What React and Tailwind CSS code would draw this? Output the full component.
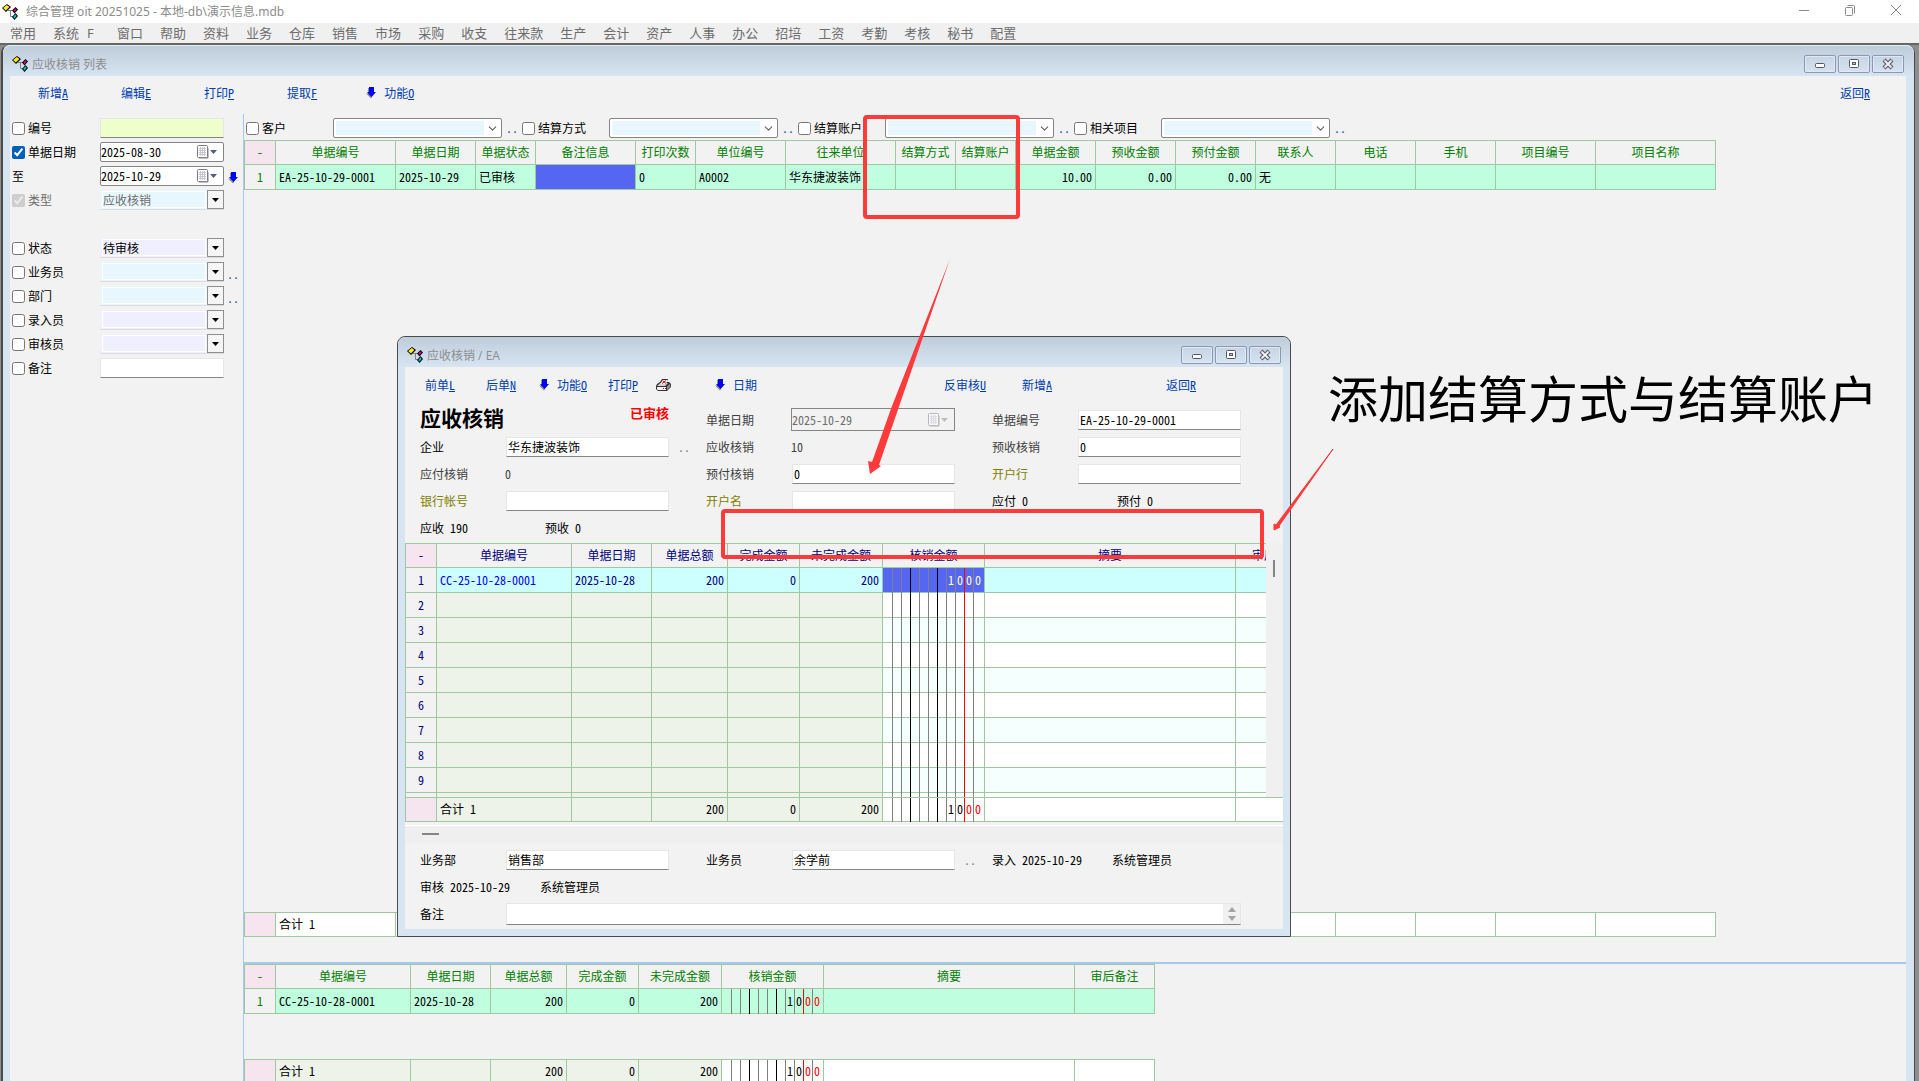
import React from 'react';
import { ChevronDown } from 'lucide-react';

const MENU = ['常用', '系统', '窗口', '帮助', '资料', '业务', '仓库', '销售', '市场', '采购', '收支', '往来款', '生产', '会计', '资产', '人事', '办公', '招培', '工资', '考勤', '考核', '秘书', '配置'];

const MAIN_COLS = [
    { label: '-', width: 31 },
    { label: '单据编号', width: 120, value: 'EA-25-10-29-0001' },
    { label: '单据日期', width: 80, value: '2025-10-29' },
    { label: '单据状态', width: 60, value: '已审核' },
    { label: '备注信息', width: 100, selected: true },
    { label: '打印次数', width: 60, value: '0' },
    { label: '单位编号', width: 90, value: 'A0002' },
    { label: '往来单位', width: 110, value: '华东捷波装饰' },
    { label: '结算方式', width: 60 },
    { label: '结算账户', width: 60 },
    { label: '单据金额', width: 80, value: '10.00', right: true },
    { label: '预收金额', width: 80, value: '0.00', right: true },
    { label: '预付金额', width: 80, value: '0.00', right: true },
    { label: '联系人', width: 80, value: '无' },
    { label: '电话', width: 80 },
    { label: '手机', width: 80 },
    { label: '项目编号', width: 100 },
    { label: '项目名称', width: 120 },
];

const DETAIL_HEADS = ['-', '单据编号', '单据日期', '单据总额', '完成金额', '未完成金额', '核销金额', '摘要', '审后备注'];
const DETAIL_WIDTHS = [31, 135, 80, 76, 72, 83, 102, 251, 80];
const DIALOG_WIDTHS = [31, 135, 80, 76, 72, 83, 102, 251, 30];
const DIALOG_TOTAL_WIDTHS = [31, 135, 80, 76, 72, 83, 102, 251, 47];

const sum = (list) => list.reduce((a, b) => a + b, 0);

function AppIcon() {
    return (
        <svg width="16" height="16" viewBox="0 0 16 16" className="shrink-0">
            <path d="M6 6.500h6M8.500 6v6.500h3" fill="none" stroke="#808080" />
            <path d="M5 0l4 3-5 5-4-4z" fill="#000" />
            <path d="M4.800 1l2.600 2-3.600 3.600L1.200 4z" fill="#ffef00" />
            <path d="M13.500 3l2.500 2.500-3.500 4-2.500-3z" fill="#000" />
            <path d="M13.500 4.300l1.200 1.200-2.200 2.500-1.200-1.500z" fill="#d0008c" />
            <path d="M13.500 9l2.500 3-3.500 4L10 13z" fill="#000" />
            <path d="M13.400 10.300l1.300 1.700-2.200 2.500-1.300-1.500z" fill="#00c0c0" />
        </svg>
    );
}

function BlueArrow() {
    return (
        <svg width="10" height="12" viewBox="0 0 10 12" className="shrink-0">
            <path d="M2 1h4v5h2.500L5 11.500 0 6.500h2z" fill="#8c8c8c" />
            <path d="M3 0h5v5h2L5.500 10 1 5h2z" fill="#0000ff" />
        </svg>
    );
}

function CalendarIcon({ muted }) {
    return (
        <svg width="20" height="14" viewBox="0 0 20 14" className={muted ? 'shrink-0 opacity-50' : 'shrink-0'}>
            <rect x="1.500" y="2.500" width="10" height="11" rx="1" fill="#8d8480" />
            <rect x="0.500" y="0.500" width="10" height="12" rx="1" fill="#fff" stroke="#7d7d86" />
            <path d="M2 3.500h7M2 5.500h7M2 7.500h7M2 9.500h7M3.500 2v9M5.500 2v9M7.500 2v9" stroke="#c4c8d6" />
            <path d="M13 5h7l-3.500 4z" fill={muted ? '#8c8c7c' : '#4d6185'} />
        </svg>
    );
}

function PrinterIcon() {
    return (
        <svg width="15" height="12" viewBox="0 0 15 12">
            <path d="M1 5l3-2 2-3h6l-1 3h2l2 2v3l-4 4H2L0 10V7z" fill="#333" />
            <path d="M1 7l3.500-3H12l-3 3z" fill="#d4d4d4" />
            <path d="M1 8h9v3H2l-1-1z" fill="#f4f4f4" />
            <path d="M11 7.500L13.500 5l.700.700V8L11 11z" fill="#8e8e8e" />
            <path d="M6.500 1h5l-1.500 4H4.500z" fill="#fff" />
            <path d="M6.500 1.500l3.500 3M10 1.500L6 4.500M7 9.500h1M9 9.500h1" stroke="#e00000" />
        </svg>
    );
}

function WindowButtons() {
    const cls = 'flex h-[18px] w-8 items-center justify-center rounded-xs border border-[#8a98b4] bg-gradient-to-b from-[#c6d4e4] to-[#d6e2f0] shadow-[inset_0_0_0_1px_#dfe8f3]';
    return (
        <div className="ml-auto flex gap-[2px]">
            <button aria-label="最小化" className={cls}>
                <svg width="12" height="12" viewBox="0 0 12 12"><rect x="1.500" y="5.500" width="9" height="4" rx="1" fill="#fff" stroke="#535666" /></svg>
            </button>
            <button aria-label="还原" className={cls}>
                <svg width="12" height="12" viewBox="0 0 12 12">
                    <rect x="1.500" y="1.500" width="9" height="8" rx="1" fill="#fff" stroke="#535666" />
                    <rect x="4.500" y="4.500" width="3" height="2" fill="#b8c6d8" stroke="#535666" />
                </svg>
            </button>
            <button aria-label="关闭" className={cls}>
                <svg width="12" height="12" viewBox="0 0 12 12">
                    <path d="M2 2l8 8M10 2L2 10" stroke="#535666" strokeWidth="4" />
                    <path d="M2.500 2.500l7 7M9.500 2.500l-7 7" stroke="#f4f4f4" strokeWidth="1.800" />
                </svg>
            </button>
        </div>
    );
}

function Command({ text, hotkey, arrow }) {
    return (
        <button className="flex items-center gap-2 whitespace-nowrap text-[#003cb0]">
            {arrow && <BlueArrow />}
            <span>{text}{hotkey && <u>{hotkey}</u>}</span>
        </button>
    );
}

function Dots() {
    return <button aria-label="选择" className="w-4 shrink-0 text-left text-[#1c4f9c]">..</button>;
}

function SideRow({ id, label, checked, disabled, plain, children }) {
    return (
        <div className="flex h-6 items-center pl-[2px]">
            <div className={`flex w-[88px] shrink-0 items-center gap-[3px] ${disabled ? 'text-[#6d6d6d]' : 'text-black'}`}>
                {!plain && <input type="checkbox" id={`${id}-on`} defaultChecked={checked} disabled={disabled} className="size-[13px] accent-[#005fb8]" />}
                <label htmlFor={plain ? id : `${id}-on`}>{label}</label>
            </div>
            {children}
        </div>
    );
}

function DateBox({ id, label, value }) {
    return (
        <div className="flex h-5 w-[124px] shrink-0 items-center rounded-xs border border-[#858585] bg-white pr-[6px]">
            <input id={id} aria-label={label} defaultValue={value} className="w-0 flex-1 outline-none" />
            <CalendarIcon />
        </div>
    );
}

function SideSelect({ label, value = '', tint, disabled }) {
    return (
        <div className={`flex h-5 w-[124px] shrink-0 border-b border-[#dcdcdc] ${tint}`}>
            <select aria-label={label} defaultValue={value} disabled={disabled} className="m-px ml-[2px] w-0 flex-1 appearance-none border border-white leading-none outline-none disabled:text-[#6d6d6d] disabled:opacity-100">
                <option value={value}>{value}</option>
            </select>
            <span className="flex w-[17px] items-center justify-center border border-[#8f8f8f] bg-[#f5f5f5]">
                <svg width="7" height="4" viewBox="0 0 7 4"><path d="M0 0h7L3.500 4z" fill="#000" /></svg>
            </span>
        </div>
    );
}

function Sidebar() {
    return (
        <aside className="w-[233px] shrink-0 pt-[2px]">
            <SideRow id="no" label="编号">
                <input aria-label="编号" className="h-5 w-[124px] border border-b-[#858585] border-[#e6e6e6] bg-[#eeffcc] outline-none" />
            </SideRow>
            <SideRow id="date" label="单据日期" checked><DateBox label="单据日期" value="2025-08-30" /></SideRow>
            <SideRow id="date-to" label="至" plain>
                <DateBox id="date-to" value="2025-10-29" />
                <span className="ml-1 pt-1"><BlueArrow /></span>
            </SideRow>
            <SideRow id="kind" label="类型" checked disabled><SideSelect label="类型" value="应收核销" tint="bg-[#e8f7fe]" disabled /></SideRow>
            <div className="h-6" />
            <SideRow id="state" label="状态"><SideSelect label="状态" value="待审核" tint="bg-[#efefff]" /></SideRow>
            <SideRow id="sales" label="业务员"><SideSelect label="业务员" tint="bg-[#e8f7fe]" /><span className="ml-[3px] pt-1"><Dots /></span></SideRow>
            <SideRow id="dept" label="部门"><SideSelect label="部门" tint="bg-[#e8f7fe]" /><span className="ml-[3px] pt-1"><Dots /></span></SideRow>
            <SideRow id="input-by" label="录入员"><SideSelect label="录入员" tint="bg-[#efefff]" /></SideRow>
            <SideRow id="audit-by" label="审核员"><SideSelect label="审核员" tint="bg-[#efefff]" /></SideRow>
            <SideRow id="memo" label="备注">
                <input aria-label="备注" className="h-5 w-[124px] border border-b-[#858585] border-[#e6e6e6] bg-white outline-none" />
            </SideRow>
        </aside>
    );
}

function FilterBar() {
    return (
        <div className="flex h-6 items-center pl-[2px]">
            {['客户', '结算方式', '结算账户', '相关项目'].map((name) => (
                <div key={name} className="flex w-[276px] items-center">
                    <label className="flex w-[88px] items-center gap-[3px]">
                        <input type="checkbox" className="size-[13px] accent-[#005fb8]" />
                        {name}
                    </label>
                    <div className="mr-1 flex h-5 w-[169px] shrink-0 items-center rounded-xs border border-[#858585] bg-white p-[2px]">
                        <select aria-label={name} className="h-full w-0 flex-1 appearance-none bg-[#e8f7fe] outline-none"><option></option></select>
                        <ChevronDown size={13} strokeWidth={2} className="ml-[2px] text-[#606060]" />
                    </div>
                    <Dots />
                </div>
            ))}
        </div>
    );
}

function Grid({ widths, children, label }) {
    return (
        <table aria-label={label} className="table-fixed border-separate border-spacing-0 border-t border-l border-[#a0c8a0]" style={{ width: sum(widths) + 1 }}>
            <colgroup>{widths.map((w, i) => <col key={i} style={{ width: w }} />)}</colgroup>
            {children}
        </table>
    );
}

function Th({ children, corner, last }) {
    return (
        <th className={`h-6 overflow-hidden border-b border-[#a0c8a0] px-0 pt-0 pb-[2px] font-normal whitespace-nowrap ${last ? '' : 'border-r'} ${corner ? 'bg-[#f6e5ef]' : ''}`}>
            {children}
        </th>
    );
}

function Td({ children, className = '', right, center, last, height = 'h-[25px]' }) {
    return (
        <td className={`${height} overflow-hidden border-b border-[#a0c8a0] px-[3px] pt-0 pb-px whitespace-nowrap ${last ? '' : 'border-r'} ${right ? 'text-right' : ''} ${center ? 'text-center' : ''} ${className}`}>
            {children}
        </td>
    );
}

const RULES = ['', 'border-l border-[#808080]', 'border-l border-[#808080]', 'border-l border-black', 'border-l border-[#808080]', 'border-l border-[#808080]', 'border-l border-black', 'border-l border-[#808080]', 'border-l border-[#808080]', 'border-l border-[#ff0000]', 'border-l border-[#808080]'];

// Ledger style amount: one digit per ruled slot, red rule before the cents
function LedgerCell({ value = '', className = '', height = 'h-[25px]', cents = 'text-[#ff0000]' }) {
    const digits = value.padStart(RULES.length, ' ').split('');
    return (
        <td className={`${height} border-r border-b border-[#a0c8a0] p-0 ${className}`}>
            <div className={`-mb-px flex ${height}`}>
                {RULES.map((rule, i) => (
                    <span key={i} className={`flex w-[9px] shrink-0 items-center justify-center pb-[2px] ${rule} ${i > 8 ? cents : ''}`}>{digits[i].trim()}</span>
                ))}
            </div>
        </td>
    );
}

function MainTable() {
    const widths = MAIN_COLS.map((c) => c.width);
    return (
        <Grid widths={widths} label="应收核销">
            <thead className="text-[#008000]">
                <tr>{MAIN_COLS.map((c, i) => <Th key={c.label} corner={i === 0}>{c.label}</Th>)}</tr>
            </thead>
            <tbody>
                <tr className="bg-[#bfffdf]">
                    {MAIN_COLS.map((c, i) => i === 0
                        ? <Td key={i} center className="bg-[#f2f2f2] text-[#008000]">1</Td>
                        : <Td key={i} right={c.right} className={c.selected ? 'bg-[#5566f2]' : ''}>{c.value}</Td>)}
                </tr>
            </tbody>
        </Grid>
    );
}

function MainTotals() {
    return (
        <Grid widths={MAIN_COLS.map((c) => c.width)} label="合计">
            <tbody>
                <tr className="bg-white">
                    {MAIN_COLS.map((c, i) => <Td key={i} height="h-6" className={i === 0 ? 'bg-[#f6e5ef]' : ''}>{i === 1 ? '合计 1' : ''}</Td>)}
                </tr>
            </tbody>
        </Grid>
    );
}

function TotalsRow({ lastOpen }) {
    return (
        <tr className="bg-[#edf3e8]">
            <Td height="h-6" className="bg-[#f6e5ef]" />
            <Td height="h-6">合计 1</Td>
            <Td height="h-6" />
            <Td height="h-6" right>200</Td>
            <Td height="h-6" right>0</Td>
            <Td height="h-6" right>200</Td>
            <LedgerCell height="h-6" value="1000" className="bg-white" />
            <Td height="h-6" className="bg-white" />
            <Td height="h-6" className="bg-white" last={lastOpen} />
        </tr>
    );
}

function DetailPane() {
    return (
        <div className="flex h-[117px] shrink-0 flex-col gap-[45px] overflow-hidden">
            <Grid widths={DETAIL_WIDTHS} label="核销明细">
                <thead className="text-[#008000]">
                    <tr>{DETAIL_HEADS.map((h, i) => <Th key={h} corner={i === 0}>{h}</Th>)}</tr>
                </thead>
                <tbody>
                    <tr className="bg-[#bfffdf]">
                        <Td center className="bg-[#f2f2f2] text-[#008000]">1</Td>
                        <Td>CC-25-10-28-0001</Td>
                        <Td>2025-10-28</Td>
                        <Td right>200</Td>
                        <Td right>0</Td>
                        <Td right>200</Td>
                        <LedgerCell value="1000" />
                        <Td />
                        <Td />
                    </tr>
                </tbody>
            </Grid>
            <Grid widths={DETAIL_WIDTHS} label="明细合计">
                <tbody><TotalsRow /></tbody>
            </Grid>
        </div>
    );
}

function Field({ id, label, value, tone = 'text-black', dots }) {
    return (
        <div className="flex h-[27px] items-center">
            <label htmlFor={id} className={`w-[86px] ${tone}`}>{label}</label>
            <input id={id} defaultValue={value} className="h-5 w-[163px] border border-[#e6e6e6] border-b-[#858585] bg-white px-px pb-px text-black outline-none" />
            {dots && <button aria-label="选择" className="ml-[9px] text-[#808080]">..</button>}
        </div>
    );
}

function Fact({ label, value, tone = 'text-[#404040]', wide = 'w-[85px]' }) {
    return (
        <div className={`flex h-[27px] items-center ${tone}`}>
            <span className={wide}>{label}</span>
            <span>{value}</span>
        </div>
    );
}

function DialogForm() {
    return (
        <div className="grid grid-cols-[286px_286px_1fr] pl-[15px]">
            <div className="flex h-[27px] pr-[37px]">
                <h1 className="text-[21px] leading-[22px] font-bold">应收核销</h1>
                <strong className="ml-auto text-[13px] leading-[14px] text-[#ff0000]">已审核</strong>
            </div>
            <div className="flex h-[27px] items-center">
                <label htmlFor="ea-date" className="w-[85px] text-[#404040]">单据日期</label>
                <div className="flex h-[23px] w-[164px] items-center border border-[#858585] pr-[6px]">
                    <input id="ea-date" disabled defaultValue="2025-10-29" className="w-0 flex-1 text-[#6d6d6d] outline-none" />
                    <CalendarIcon muted />
                </div>
            </div>
            <Field id="ea-no" label="单据编号" value="EA-25-10-29-0001" tone="text-[#404040]" />
            <Field id="ea-corp" label="企业" value="华东捷波装饰" dots />
            <Fact label="应收核销" value="10" />
            <Field id="ea-pre" label="预收核销" value="0" tone="text-[#404040]" />
            <Fact label="应付核销" value="0" />
            <Field id="ea-prepay" label="预付核销" value="0" tone="text-[#404040]" />
            <Field id="ea-bank" label="开户行" value="" tone="text-[#808000]" />
            <Field id="ea-account" label="银行帐号" value="" tone="text-[#808000]" />
            <Field id="ea-holder" label="开户名" value="" tone="text-[#808000]" />
            <div className="flex">
                <Fact label="应付 0" tone="text-black" wide="w-[125px]" />
                <Fact label="预付 0" tone="text-black" />
            </div>
            <div className="flex">
                <Fact label="应收 190" tone="text-black" wide="w-[125px]" />
                <Fact label="预收 0" tone="text-black" />
            </div>
        </div>
    );
}

function DialogTable() {
    return (
        <div className="mt-[2px]">
            <div className="flex h-[254px] overflow-hidden">
                <Grid widths={DIALOG_WIDTHS} label="单据明细">
                    <thead className="text-[#000080]">
                        <tr>
                            {DETAIL_HEADS.map((h, i) => <Th key={h} corner={i === 0} last={i === 8}>{i === 8 ? <span className="pl-4">{h}</span> : h}</Th>)}
                        </tr>
                    </thead>
                    <tbody className="text-[#000080]">
                        <tr className="bg-[#ceffff]">
                            <Td center className="bg-[#f2f2f2]">1</Td>
                            <Td className="text-[#0000ff]">CC-25-10-28-0001</Td>
                            <Td>2025-10-28</Td>
                            <Td right>200</Td>
                            <Td right>0</Td>
                            <Td right>200</Td>
                            <LedgerCell value="1000" className="bg-[#5566f2] text-white" cents="text-white" />
                            <Td />
                            <Td last />
                        </tr>
                        {[2, 3, 4, 5, 6, 7, 8, 9, 10].map((n) => (
                            <tr key={n} className="bg-[#edf3e8]">
                                <Td center className="bg-[#f2f2f2]">{n < 10 ? n : ''}</Td>
                                <Td /><Td /><Td /><Td /><Td />
                                <LedgerCell className={n % 2 ? 'bg-[#f5fffe]' : 'bg-white'} />
                                <Td className={n % 2 ? 'bg-[#f5fffe]' : 'bg-white'} />
                                <Td last className={n % 2 ? 'bg-[#f5fffe]' : 'bg-white'} />
                            </tr>
                        ))}
                    </tbody>
                </Grid>
                <div className="flex-1 bg-[#f0f0f0] pt-[17px] pl-[7px]">
                    <div className="h-[17px] w-[2px] bg-[#858585]" />
                </div>
            </div>
            <Grid widths={DIALOG_TOTAL_WIDTHS} label="单据合计">
                <tbody><TotalsRow lastOpen /></tbody>
            </Grid>
        </div>
    );
}

function Dialog() {
    return (
        <section className="absolute top-[336px] left-[397px] flex w-[894px] flex-col rounded-t-lg border border-[#4a4a4a] bg-[#d7e4f2] px-[7px] pb-[7px]">
            <header className="-mx-[7px] flex h-[30px] items-center gap-1 rounded-t-lg bg-gradient-to-b from-[#bfcddb] to-[#d7e4f2] px-[9px] pt-[6px] text-[#8d8d8d]">
                <AppIcon />
                <h2 className="pt-px font-['Open_Sans','Noto_Sans_CJK_SC',sans-serif]">应收核销 / EA</h2>
                <WindowButtons />
            </header>
            <div className="bg-[#f2f2f2] pb-[2px]">
                <nav className="mb-[3px] grid h-9 grid-cols-[61px_53px_69px_48px_59px_229px_78px_144px_auto] items-center justify-start pl-[20px]">
                    <Command text="前单" hotkey="L" />
                    <Command text="后单" hotkey="N" />
                    <Command text="功能" hotkey="O" arrow />
                    <Command text="打印" hotkey="P" />
                    <button aria-label="打印机"><PrinterIcon /></button>
                    <Command text="日期" arrow />
                    <Command text="反审核" hotkey="U" />
                    <Command text="新增" hotkey="A" />
                    <Command text="返回" hotkey="R" />
                </nav>
                <DialogForm />
                <DialogTable />
                <div className="mt-[3px] mb-[3px] h-[18px] border-t border-white bg-[#efefef] pt-[7px] pl-[17px]">
                    <div className="h-[2px] w-[17px] bg-[#858585]" />
                </div>
                <div className="grid grid-cols-[286px_286px_1fr] pl-[15px]">
                    <Field id="ea-dept" label="业务部" value="销售部" />
                    <Field id="ea-sales" label="业务员" value="余学前" dots />
                    <Fact label="录入 2025-10-29" value="系统管理员" tone="text-black" wide="w-[120px]" />
                    <div className="col-span-3">
                        <Fact label="审核 2025-10-29" value="系统管理员" tone="text-black" wide="w-[120px]" />
                    </div>
                    <div className="col-span-3 flex h-[27px] items-center">
                        <label htmlFor="ea-memo" className="w-[86px]">备注</label>
                        <div className="flex h-[22px] w-[735px] border border-[#e6e6e6] border-b-[#858585] bg-white">
                            <textarea id="ea-memo" rows={1} className="flex-1 resize-none outline-none" />
                            <span className="flex w-[17px] items-center justify-center bg-[#f0f0f0]">
                                <svg width="8" height="16" viewBox="0 0 8 16"><path d="M4 1l4 5H0zM4 15L0 10h8z" fill="#a3a3a3" /></svg>
                            </span>
                        </div>
                    </div>
                </div>
            </div>
        </section>
    );
}

function Annotations() {
    return (
        <>
            <div className="absolute top-[115px] left-[863px] h-[104px] w-[157px] rounded-sm border-4 border-[#ff3a3a]" />
            <div className="absolute top-[509px] left-[721px] h-[50px] w-[543px] rounded-sm border-4 border-[#ff3a3a]" />
            <svg className="absolute top-[259px] left-[866px]" width="86" height="216" viewBox="0 0 86 216">
                <path d="M84 0L32.500 149 13 206l2 1-11 8-2-13 4 1L26 147z" fill="#ff3a3a" />
            </svg>
            <svg className="absolute top-[449px] left-[1273px]" width="62" height="83" viewBox="0 0 62 83">
                <path d="M60 0L6 77l1 1-6 3 0-6 2 1z" fill="#ff3a3a" stroke="#ff3a3a" strokeWidth="1" />
            </svg>
            <p className="absolute top-[360px] left-[1328px] font-['Noto_Sans_CJK_SC',sans-serif] text-[50px] leading-[72px] whitespace-nowrap">添加结算方式与结算账户</p>
        </>
    );
}

export default function App() {
    return (
        <div className="relative flex h-screen flex-col overflow-hidden bg-[#f0f0f0] font-['Noto_Sans_Mono_CJK_SC','Noto_Sans_CJK_SC',monospace] text-[12px] leading-4 text-black">
            <header className="flex h-[23px] shrink-0 items-center bg-white pl-[2px] text-[#8d8d8d]">
                <AppIcon />
                <span className="ml-2 font-['Noto_Sans','Noto_Sans_CJK_SC',sans-serif]">综合管理 oit 20251025 - 本地-db\演示信息.mdb</span>
                <div className="ml-auto flex pb-1">
                    <button aria-label="最小化" className="flex w-[46px] justify-center"><svg width="12" height="12"><path d="M1 6.500h10" stroke="#8a8a8a" /></svg></button>
                    <button aria-label="还原" className="flex w-[46px] justify-center">
                        <svg width="12" height="12" fill="none" stroke="#8a8a8a"><rect x="1.500" y="3.500" width="7" height="8" rx="1" /><path d="M3.500 1.500h6a1 1 0 0 1 1 1v7" /></svg>
                    </button>
                    <button aria-label="关闭" className="flex w-[46px] justify-center"><svg width="12" height="12"><path d="M1 1l10 10M11 1L1 11" stroke="#8a8a8a" /></svg></button>
                </div>
            </header>
            <nav className="flex h-5 shrink-0 items-center gap-[17px] pl-[10px] font-['Noto_Sans','Noto_Sans_CJK_SC',sans-serif] text-[13px] text-[#6d6d6d]">
                {MENU.map((m) => (
                    <button key={m} className={m === '系统' ? 'flex w-[47px] gap-2' : ''}>{m}{m === '系统' && <span>F</span>}</button>
                ))}
            </nav>

            <main className="flex min-h-0 flex-1 border-t-2 border-[#666] bg-[#8e8e8e] pl-px">
                <div className="mr-1 flex min-w-0 flex-1 flex-col rounded-t-lg border-r border-l-2 border-[#4a4a4a] bg-[#d7e4f2] pr-2 pl-[7px]">
                    <div className="-mr-2 -ml-[7px] flex h-[31px] shrink-0 items-center gap-[2px] rounded-t-lg border-t border-[#e6eef6] bg-gradient-to-b from-[#bfcddb] to-[#d7e4f2] pt-[6px] pr-[10px] pl-[9px] text-[#8d8d8d]">
                        <AppIcon />
                        <h2 className="ml-[2px] pt-[2px] font-['Noto_Sans','Noto_Sans_CJK_SC',sans-serif]">应收核销 列表</h2>
                        <WindowButtons />
                    </div>
                    <div className="flex min-h-0 flex-1 flex-col bg-[#f2f2f2]">
                        <nav className="mb-1 flex h-[34px] shrink-0 items-center gap-[53px] pr-9 pl-[28px]">
                            <Command text="新增" hotkey="A" />
                            <Command text="编辑" hotkey="E" />
                            <Command text="打印" hotkey="P" />
                            <Command text="提取" hotkey="F" />
                            <span className="-ml-1"><Command text="功能" hotkey="O" arrow /></span>
                            <span className="ml-auto"><Command text="返回" hotkey="R" /></span>
                        </nav>
                        <div className="flex min-h-0 flex-1">
                            <Sidebar />
                            <div className="flex min-w-0 flex-1 flex-col border-l border-[#a4c8f0]">
                                <div className="flex min-h-0 flex-1 flex-col border-b-2 border-[#a4c8f0] pt-[2px] pb-[25px]">
                                    <FilterBar />
                                    <MainTable />
                                    <div className="mt-auto"><MainTotals /></div>
                                </div>
                                <DetailPane />
                            </div>
                        </div>
                    </div>
                </div>
            </main>

            <Dialog />
            <Annotations />
        </div>
    );
}
